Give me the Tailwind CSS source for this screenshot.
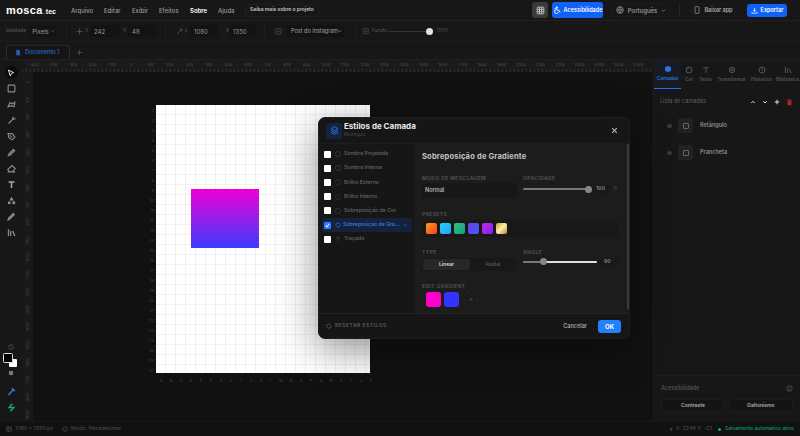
<!DOCTYPE html>
<html lang="pt">
<head>
<meta charset="UTF-8">
<title>mosca.tec</title>
<script src="https://cdn.jsdelivr.net/npm/@tailwindcss/browser@4"></script>
</head>
<body class="bg-[#111111] overflow-hidden">
<div class="relative w-[800px] h-[436px] overflow-hidden flex flex-col bg-[#111111] text-[#8a8a8a] font-['Inter',sans-serif] text-[6px] whitespace-nowrap">

  <!-- top menu -->
  <header class="h-[21px] shrink-0 flex items-center bg-[#171717] border-b border-[#202020] pl-[6px] pr-[13px]">
    <div class="w-[65px] flex items-baseline font-['Liberation_Sans',sans-serif] text-white">
      <span class="text-[11px] font-bold tracking-[0.4px]">mosca</span><span class="text-[7px] font-bold ml-[1px]"><span class="text-[#2f7bff]">.</span>tec</span>
    </div>
    <nav class="flex items-center text-[6px] font-medium text-[#9a9a9a]">
      <span class="w-[33px]">Arquivo</span>
      <span class="w-[28px]">Editar</span>
      <span class="w-[27px]">Exibir</span>
      <span class="w-[31px]">Efeitos</span>
      <span class="w-[28px] text-white font-semibold">Sobre</span>
      <span class="w-[27px]">Ajuda</span>
    </nav>
    <div class="h-[13px] w-[74px] rounded-[3px] border border-[#1f1f1f] text-[#c4c4c4] text-[5px] font-semibold flex items-center justify-center">Saiba mais sobre o projeto</div>
    <div class="flex-1"></div>
    <div class="w-[16px] h-[16px] rounded-[3px] bg-[#3a3a3a] flex items-center justify-center text-[#ddd]">
      <svg class="w-[9px] h-[9px]" viewBox="0 0 24 24" fill="none" stroke="currentColor" stroke-width="2"><rect x="3" y="3" width="18" height="18" rx="2"/><path d="M3 9h18M3 15h18M9 3v18M15 3v18"/></svg>
    </div>
    <button class="ml-[4px] w-[51px] h-[16px] rounded-[3px] bg-[#0f62f5] text-white flex items-center justify-center gap-[3px] text-[5.5px] font-semibold">
      <svg class="w-[8px] h-[8px]" viewBox="0 0 24 24" fill="none" stroke="currentColor" stroke-width="2.6" stroke-linecap="round"><circle cx="11" cy="4" r="2"/><path d="M5 9l6-2 2 6h5l3 6M9 11a6 6 0 1 0 7 8"/></svg>
      Acessibilidade
    </button>
    <div class="ml-[8px] w-[60px] h-[14px] rounded-[3px] border border-[#1c1c1c] flex items-center justify-center gap-[4px] text-[6px] font-medium text-[#a0a0a0]">
      <svg class="w-[8px] h-[8px]" viewBox="0 0 24 24" fill="none" stroke="currentColor" stroke-width="2"><circle cx="12" cy="12" r="10"/><path d="M2 12h20M12 2a15 15 0 0 1 0 20M12 2a15 15 0 0 0 0 20"/></svg>
      Português
      <svg class="w-[5px] h-[5px]" viewBox="0 0 24 24" fill="none" stroke="currentColor" stroke-width="3"><path d="M5 9l7 7 7-7"/></svg>
    </div>
    <div class="ml-[8px] w-px h-[12px] bg-[#242424]"></div>
    <div class="ml-[11px] w-[44px] h-[13px] rounded-[3px] border border-[#1c1c1c] flex items-center justify-center gap-[3px] text-[5.5px] font-semibold text-[#a8a8a8]">
      <svg class="w-[8px] h-[8px]" viewBox="0 0 24 24" fill="none" stroke="currentColor" stroke-width="2"><rect x="6" y="2" width="12" height="20" rx="2"/></svg>
      Baixar app
    </div>
    <button class="ml-[12px] w-[40px] h-[13px] rounded-[3px] bg-[#0f62f5] text-white flex items-center justify-center gap-[3px] text-[5.5px] font-semibold">
      <svg class="w-[7px] h-[7px]" viewBox="0 0 24 24" fill="none" stroke="currentColor" stroke-width="2.5"><path d="M12 3v12M7 10l5 5 5-5M3 17v4h18v-4"/></svg>
      Exportar
    </button>
  </header>

  <!-- options bar -->
  <div class="h-[21px] shrink-0 flex items-center bg-[#171717] border-b border-[#1d1d1d] pl-[6px] text-[6px]">
    <span class="w-[24px] text-[5px] font-semibold text-[#4f4f4f]">Unidade</span>
    <div class="w-[27px] h-[12px] bg-[#131313] rounded-[2px] flex items-center justify-center gap-[2px] text-[#9a9a9a]">Pixels
      <svg class="w-[4px] h-[4px]" viewBox="0 0 24 24" fill="none" stroke="currentColor" stroke-width="3"><path d="M5 9l7 7 7-7"/></svg>
    </div>
    <div class="ml-[9px] mr-[9px] w-px h-[11px] bg-[#202020]"></div>
    <svg class="w-[7px] h-[7px] text-[#555]" viewBox="0 0 24 24" fill="none" stroke="currentColor" stroke-width="3"><path d="M12 2v20M2 12h20"/></svg>
    <span class="ml-[2px] w-[5px] text-[5px] text-[#555]">X</span>
    <div class="w-[29px] h-[12px] bg-[#131313] rounded-[2px] flex items-center pl-[4px] text-[#9a9a9a]">242</div>
    <span class="ml-[4px] w-[5px] text-[5px] text-[#555]">Y</span>
    <div class="w-[29px] h-[12px] bg-[#131313] rounded-[2px] flex items-center pl-[4px] text-[#9a9a9a]">48</div>
    <div class="ml-[8px] mr-[10px] w-px h-[11px] bg-[#202020]"></div>
    <svg class="w-[7px] h-[7px] text-[#555]" viewBox="0 0 24 24" fill="none" stroke="currentColor" stroke-width="3"><path d="M4 20L20 4M13 4h7v7"/></svg>
    <span class="ml-[2px] w-[4px] text-[5px] text-[#555]">L</span>
    <div class="ml-[1px] w-[28px] h-[12px] bg-[#131313] rounded-[2px] flex items-center pl-[4px] text-[#9a9a9a]">1080</div>
    <span class="ml-[8px] w-[3px] text-[5px] text-[#555]">A</span>
    <div class="w-[27px] h-[12px] bg-[#131313] rounded-[2px] flex items-center pl-[4px] text-[#9a9a9a]">1350</div>
    <div class="ml-[8px] mr-[10px] w-px h-[11px] bg-[#202020]"></div>
    <svg class="w-[7px] h-[7px] text-[#666]" viewBox="0 0 24 24" fill="none" stroke="currentColor" stroke-width="2"><rect x="3" y="3" width="18" height="18" rx="2"/><path d="M8 12h8"/></svg>
    <div class="ml-[4px] w-[59px] h-[12px] bg-[#131313] rounded-[2px] flex items-center justify-between pl-[5px] pr-[3px] text-[5.5px] text-[#a0a0a0]">Post do Instagram
      <svg class="w-[6px] h-[6px] text-[#ccc]" viewBox="0 0 24 24" fill="none" stroke="currentColor" stroke-width="4"><path d="M5 9l7 7 7-7"/></svg>
    </div>
    <div class="ml-[10px] mr-[7px] w-px h-[11px] bg-[#202020]"></div>
    <svg class="w-[6px] h-[6px] text-[#555]" viewBox="0 0 24 24" fill="none" stroke="currentColor" stroke-width="2"><rect x="3" y="3" width="18" height="18"/><path d="M3 12h18M12 3v18"/></svg>
    <span class="ml-[3px] w-[16px] text-[5px] text-[#555]">Fundo</span>
    <div class="relative w-[45px] h-px bg-[#333]">
      <div class="absolute right-0 -top-[3px] w-[7px] h-[7px] rounded-full bg-[#e4e4e4]"></div>
    </div>
    <span class="ml-[4px] text-[4.5px] text-[#555]">100%</span>
  </div>

  <!-- tabs -->
  <div class="h-[18px] shrink-0 flex items-end bg-[#171717] border-b border-[#1f1f1f] pl-[6px]">
    <div class="w-[64px] h-[14px] rounded-t-[3px] border border-b-0 border-[#2a2a2a] bg-[#151515] flex items-center pl-[8px] gap-[4px] text-[5.5px] font-semibold text-[#2a5cb8]">
      <svg class="w-[6px] h-[7px]" viewBox="0 0 24 24" fill="currentColor"><path d="M5 1h10l5 5v17H5z"/></svg>
      Documento 1
    </div>
    <svg class="ml-[6px] mb-[3px] w-[7px] h-[7px] text-[#555]" viewBox="0 0 24 24" fill="none" stroke="currentColor" stroke-width="2.5"><path d="M12 3v18M3 12h18"/></svg>
  </div>

  <!-- main -->
  <div class="flex-1 flex min-h-0">
    <!-- tools -->
    <aside class="w-[22px] shrink-0 bg-[#171717] flex flex-col items-center pt-[8px] text-[#8c8c8c]">
      <div class="flex flex-col items-center gap-[7px]">
        <div class="w-[11px] h-[9px] flex items-center justify-center relative">
          <div class="absolute -inset-x-[1px] -inset-y-[2px] rounded-full bg-[#0b0b0b]"></div>
          <svg class="relative w-[8px] h-[8px] text-[#ddd]" viewBox="0 0 24 24" fill="none" stroke="currentColor" stroke-width="3"><path d="M4 3l16 8-7 2-3 8z"/></svg>
        </div>
        <svg class="w-[9px] h-[9px]" viewBox="0 0 24 24" fill="none" stroke="currentColor" stroke-width="3"><rect x="3" y="3" width="18" height="18" rx="2"/></svg>
        <svg class="w-[9px] h-[9px]" viewBox="0 0 24 24" fill="none" stroke="currentColor" stroke-width="3"><path d="M3 18L8 7l6 3 7-4-2 12-7-3z"/></svg>
        <svg class="w-[9px] h-[9px]" viewBox="0 0 24 24" fill="none" stroke="currentColor" stroke-width="3"><path d="M4 20L16 8M14 4l6 6M17 2l1 2M21 6l2 1"/></svg>
        <svg class="w-[9px] h-[9px]" viewBox="0 0 24 24" fill="none" stroke="currentColor" stroke-width="3"><path d="M3 4l12 1 6 9-7 7-9-6zM8 9l5 5"/></svg>
        <svg class="w-[9px] h-[9px]" viewBox="0 0 24 24" fill="none" stroke="currentColor" stroke-width="3.5"><path d="M4 20l2-5L17 4l3 3L9 18z"/></svg>
        <svg class="w-[9px] h-[9px]" viewBox="0 0 24 24" fill="none" stroke="currentColor" stroke-width="3"><path d="M7 21l-5-6L13 4l9 8-8 9zM2 21h20"/></svg>
        <svg class="w-[9px] h-[9px] text-[#aaa]" viewBox="0 0 24 24" fill="none" stroke="currentColor" stroke-width="4"><path d="M4 5h16M12 5v16"/></svg>
        <svg class="w-[9px] h-[9px]" viewBox="0 0 24 24" fill="currentColor"><path d="M12 2l6 10H6z"/><circle cx="6" cy="18" r="4"/><rect x="14" y="14" width="8" height="8" rx="3"/></svg>
        <svg class="w-[9px] h-[9px]" viewBox="0 0 24 24" fill="none" stroke="currentColor" stroke-width="3.5"><path d="M3 21l3-1L19 7l-2-3L4 17z"/></svg>
        <svg class="w-[9px] h-[9px]" viewBox="0 0 24 24" fill="none" stroke="currentColor" stroke-width="3.5"><path d="M4 3v18M10 8v13M15 8l6 13"/></svg>
      </div>
      <div class="flex-1"></div>
      <svg class="w-[6px] h-[6px] text-[#666] mb-[3px]" viewBox="0 0 24 24" fill="none" stroke="currentColor" stroke-width="3"><path d="M3 12a9 9 0 0 1 15-6l3 3M21 12a9 9 0 0 1-15 6l-3-3"/></svg>
      <div class="relative w-[15px] h-[15px] -ml-[2px]">
        <div class="absolute left-[6px] top-[6px] w-[8px] h-[8px] bg-white rounded-[1px]"></div>
        <div class="absolute left-0 top-0 w-[10px] h-[10px] bg-black border border-[#ddd] rounded-[1.5px]"></div>
      </div>
      <div class="mt-[3px] w-[4px] h-[4px] bg-[#777]"></div>
      <svg class="mt-[12px] w-[9px] h-[9px] text-[#3d6fd8]" viewBox="0 0 24 24" fill="none" stroke="currentColor" stroke-width="4"><path d="M4 21L16 8M13 3l8 8"/></svg>
      <svg class="mt-[7px] mb-[9px] w-[9px] h-[9px] text-[#17a86b]" viewBox="0 0 24 24" fill="none" stroke="currentColor" stroke-width="4"><path d="M14 2L6 12h12L9 22"/></svg>
    </aside>

    <!-- rulers and canvas -->
    <div class="flex-1 flex flex-col min-w-0">
      <div id="ruler-top" class="relative h-[12px] shrink-0 bg-[#1a1a1a] overflow-hidden bg-[repeating-linear-gradient(90deg,#2e2e2e_0,#2e2e2e_1px,transparent_1px,transparent_4px)] bg-[length:100%_3px] bg-bottom bg-no-repeat"></div>
      <div class="flex-1 flex min-h-0">
        <div id="ruler-left" class="relative w-[11px] shrink-0 bg-[#191919] overflow-hidden"></div>
        <div class="relative flex-1 bg-[#111111]">
          <div id="row-labels" class="absolute left-[113px] top-0"></div>
          <div class="absolute left-[123px] top-[33px] w-[214px] h-[268px] bg-white bg-[linear-gradient(#f1f1f1_1px,transparent_1px),linear-gradient(90deg,#f1f1f1_1px,transparent_1px)] bg-[size:10px_10px] bg-[position:9px_9px]">
            <div class="absolute left-[35px] top-[84px] w-[68px] h-[59px] bg-linear-to-b/srgb from-[#f000d4] to-[#3d3dff]"></div>
          </div>
          <div id="col-labels" class="absolute left-0 top-[306px]"></div>
        </div>
      </div>
    </div>

    <!-- right panel -->
    <aside class="w-[147px] shrink-0 bg-[#171717] border-l border-[#1c1c1c] flex flex-col">
      <div class="h-[29px] shrink-0 flex text-[4.8px] font-semibold text-[#555]">
        <div class="w-[27px] bg-[#161b24] border-b border-[#2270f0] text-[#2c70dc] flex flex-col items-center justify-center gap-[2px]">
          <svg class="w-[8px] h-[8px]" viewBox="0 0 24 24" fill="currentColor"><path d="M12 2l9 5v10l-9 5-9-5V7z"/></svg>
          <span>Camadas</span>
        </div>
        <div class="w-[14px] ml-[1px] flex flex-col items-center justify-center gap-[2px]">
          <svg class="w-[8px] h-[8px]" viewBox="0 0 24 24" fill="none" stroke="currentColor" stroke-width="3"><circle cx="12" cy="12" r="9"/><circle cx="9" cy="9" r="1"/></svg>
          <span>Cor</span>
        </div>
        <div class="w-[19px] flex flex-col items-center justify-center gap-[2px]">
          <svg class="w-[8px] h-[8px]" viewBox="0 0 24 24" fill="none" stroke="currentColor" stroke-width="3"><path d="M4 5h16M12 5v16"/></svg>
          <span>Texto</span>
        </div>
        <div class="w-[33px] flex flex-col items-center justify-center gap-[2px]">
          <svg class="w-[8px] h-[8px]" viewBox="0 0 24 24" fill="none" stroke="currentColor" stroke-width="3"><circle cx="12" cy="12" r="8"/><circle cx="12" cy="12" r="3"/></svg>
          <span>Transformar</span>
        </div>
        <div class="w-[27px] flex flex-col items-center justify-center gap-[2px]">
          <svg class="w-[8px] h-[8px]" viewBox="0 0 24 24" fill="none" stroke="currentColor" stroke-width="3"><circle cx="12" cy="12" r="9"/><path d="M12 7v5l3 2"/></svg>
          <span>Histórico</span>
        </div>
        <div class="w-[25px] flex flex-col items-center justify-center gap-[2px]">
          <svg class="w-[8px] h-[8px]" viewBox="0 0 24 24" fill="none" stroke="currentColor" stroke-width="3"><path d="M4 3v18M10 8v13M15 8l6 13"/></svg>
          <span>Biblioteca</span>
        </div>
      </div>
      <div class="flex items-center pl-[6px] pr-[7px] mt-[8px] h-[9px] text-[#555] text-[5.5px] font-medium">
        <span class="flex-1">Lista de camadas</span>
        <div class="flex items-center gap-[6px] text-[#ddd]">
          <svg class="w-[6px] h-[6px]" viewBox="0 0 24 24" fill="none" stroke="currentColor" stroke-width="4"><path d="M5 16l7-7 7 7"/></svg>
          <svg class="w-[6px] h-[6px]" viewBox="0 0 24 24" fill="none" stroke="currentColor" stroke-width="4"><path d="M5 9l7 7 7-7"/></svg>
          <svg class="w-[6px] h-[6px]" viewBox="0 0 24 24" fill="none" stroke="currentColor" stroke-width="4"><path d="M12 3v18M3 12h18"/></svg>
          <svg class="w-[7px] h-[8px] text-[#b3272d]" viewBox="0 0 24 24" fill="currentColor"><path d="M3 5h18v3H3zM9 1h6v3H9zM5 9h14l-1 14H6z"/></svg>
        </div>
      </div>
      <div class="mt-[12px] flex flex-col gap-[12px] pl-[13px]">
        <div class="flex items-center h-[15px]">
          <div class="w-[5px] h-[4px] rounded-full bg-[#3a3a3a]"></div>
          <div class="ml-[6px] w-[15px] h-[15px] rounded-[2px] bg-[#222] flex items-center justify-center">
            <div class="w-[6px] h-[6px] rounded-[1px] border border-[#666]"></div>
          </div>
          <span class="ml-[7px] text-[5.5px] font-semibold text-[#8c8c8c]">Retângulo</span>
        </div>
        <div class="flex items-center h-[15px]">
          <div class="w-[5px] h-[4px] rounded-full bg-[#3a3a3a]"></div>
          <div class="ml-[6px] w-[15px] h-[15px] rounded-[2px] bg-[#222] flex items-center justify-center">
            <div class="w-[6px] h-[6px] rounded-[1px] border border-[#666]"></div>
          </div>
          <span class="ml-[7px] text-[5.5px] font-semibold text-[#8c8c8c]">Prancheta</span>
        </div>
      </div>
      <div class="flex-1"></div>
      <div class="border-t border-[#1d1d1d] h-[46px] shrink-0 px-[7px] pt-[8px]">
        <div class="flex items-center justify-between text-[5.5px] font-medium text-[#555]">
          <span>Acessibilidade</span>
          <svg class="w-[7px] h-[7px] text-[#555]" viewBox="0 0 24 24" fill="none" stroke="currentColor" stroke-width="3"><circle cx="12" cy="12" r="9"/><path d="M12 11v6"/></svg>
        </div>
        <div class="mt-[7px] flex gap-[4px] text-[5px] font-semibold text-[#b0b0b0]">
          <div class="w-[65px] h-[13px] rounded-[2px] bg-[#141414] border border-[#1c1c1c] flex items-center justify-center">Contraste</div>
          <div class="w-[65px] h-[13px] rounded-[2px] bg-[#141414] border border-[#1c1c1c] flex items-center justify-center">Daltonismo</div>
        </div>
      </div>
    </aside>
  </div>

  <!-- status bar -->
  <footer class="h-[15px] shrink-0 bg-[#111111] border-t border-[#171717] flex items-center pl-[6px] pr-[6px] text-[5.3px] text-[#4f4f4f]">
    <svg class="w-[6px] h-[6px]" viewBox="0 0 24 24" fill="none" stroke="currentColor" stroke-width="3"><rect x="3" y="3" width="18" height="18" rx="2"/><path d="M3 9h18M9 9v12"/></svg>
    <span class="ml-[3px] w-[47px]">1080 × 1350 px</span>
    <svg class="w-[6px] h-[6px]" viewBox="0 0 24 24" fill="none" stroke="currentColor" stroke-width="3"><circle cx="12" cy="12" r="9"/></svg>
    <span class="ml-[3px]">Modo: Hexadecimal</span>
    <div class="flex-1"></div>
    <svg class="w-[5px] h-[5px]" viewBox="0 0 24 24" fill="currentColor"><path d="M3 3l18 6-8 3-3 9z"/></svg>
    <span class="ml-[2px] w-[42px]">X: 2248 Y: -23</span>
    <div class="w-[3px] h-[3px] rounded-full bg-[#17b26a]"></div>
    <span class="ml-[4px] text-[5px] text-[#0f9d63] font-medium">Salvamento automático ativo</span>
  </footer>

  <!-- layer styles dialog -->
  <div class="absolute left-[318px] top-[117px] w-[312px] h-[222px] rounded-[7px] bg-[#161616] border border-[#1f1f1f] shadow-[0_10px_40px_rgba(0,0,0,0.45)] flex flex-col overflow-hidden">
    <div class="h-[26px] shrink-0 flex items-center pl-[7px] pr-[11px] border-b border-[#1d1d1d]">
      <div class="w-[16px] h-[16px] rounded-[3px] bg-[#14233f] flex items-center justify-center text-[#2c74ea]">
        <svg class="w-[9px] h-[9px]" viewBox="0 0 24 24" fill="none" stroke="currentColor" stroke-width="2.5"><path d="M12 2l9 5-9 5-9-5zM3 12l9 5 9-5M3 17l9 5 9-5"/></svg>
      </div>
      <div class="ml-[2px] -mt-[1px] flex flex-col">
        <span class="text-[8px] leading-[9px] font-bold text-[#e8e8e8]">Estilos de Camada</span>
        <span class="text-[4.5px] leading-[7px] text-[#4a4a4a]">Retângulo</span>
      </div>
      <div class="flex-1"></div>
      <svg class="w-[7px] h-[7px] text-[#bbb]" viewBox="0 0 24 24" fill="none" stroke="currentColor" stroke-width="3.5"><path d="M4 4l16 16M20 4L4 20"/></svg>
    </div>
    <div class="flex-1 flex min-h-0">
      <!-- effect list -->
      <div class="w-[95px] shrink-0 pt-[3px] flex flex-col text-[5.2px] font-medium text-[#666]">
        <div class="h-[14.2px] flex items-center pl-[5px]">
          <div class="w-[7px] h-[7px] rounded-[1px] bg-white"></div>
          <div class="ml-[4px] w-[6px] h-[6px] rounded-full border border-[#333]"></div>
          <span class="ml-[3px]">Sombra Projetada</span>
        </div>
        <div class="h-[14.2px] flex items-center pl-[5px]">
          <div class="w-[7px] h-[7px] rounded-[1px] bg-white"></div>
          <div class="ml-[4px] w-[6px] h-[6px] rounded-full border border-[#333]"></div>
          <span class="ml-[3px]">Sombra Interna</span>
        </div>
        <div class="h-[14.2px] flex items-center pl-[5px]">
          <div class="w-[7px] h-[7px] rounded-[1px] bg-white"></div>
          <div class="ml-[4px] w-[6px] h-[6px] rounded-full border border-[#2a2a2a]"></div>
          <span class="ml-[3px]">Brilho Externo</span>
        </div>
        <div class="h-[14.2px] flex items-center pl-[5px]">
          <div class="w-[7px] h-[7px] rounded-[1px] bg-white"></div>
          <div class="ml-[4px] w-[6px] h-[6px] rounded-full border border-[#2a2a2a]"></div>
          <span class="ml-[3px]">Brilho Interno</span>
        </div>
        <div class="h-[14.2px] flex items-center pl-[5px]">
          <div class="w-[7px] h-[7px] rounded-[1px] bg-white"></div>
          <div class="ml-[4px] w-[6px] h-[6px] rounded-full border border-[#333]"></div>
          <span class="ml-[3px]">Sobreposição de Cor</span>
        </div>
        <div class="h-[14.2px] ml-[3px] mr-[2px] rounded-[2px] bg-[#14233b] flex items-center pl-[2px] text-[#3f7be0]">
          <div class="w-[7px] h-[7px] rounded-[1px] bg-[#2f7bff] flex items-center justify-center">
            <svg class="w-[5px] h-[5px] text-white" viewBox="0 0 24 24" fill="none" stroke="currentColor" stroke-width="5"><path d="M4 12l5 6L20 6"/></svg>
          </div>
          <svg class="ml-[4px] w-[6px] h-[6px]" viewBox="0 0 24 24" fill="none" stroke="currentColor" stroke-width="3"><path d="M3 12a9 9 0 0 1 15-6l3 3M21 12a9 9 0 0 1-15 6l-3-3"/></svg>
          <span class="ml-[2px]">Sobreposição de Gra...</span>
          <svg class="ml-[3px] w-[4px] h-[4px]" viewBox="0 0 24 24" fill="none" stroke="currentColor" stroke-width="4"><path d="M5 9l7 7 7-7"/></svg>
        </div>
        <div class="h-[14.2px] flex items-center pl-[5px]">
          <div class="w-[7px] h-[7px] rounded-[1px] bg-white"></div>
          <svg class="ml-[4px] w-[6px] h-[6px] text-[#444]" viewBox="0 0 24 24" fill="none" stroke="currentColor" stroke-width="3"><path d="M4 5h16M12 5v16"/></svg>
          <span class="ml-[3px]">Traçado</span>
        </div>
      </div>
      <!-- settings -->
      <div class="relative flex-1 bg-[#1c1c1c] pl-[8px] pr-[12px] pt-[8px]">
        <div class="text-[7.5px] leading-[9px] font-bold tracking-[0.2px] text-[#c4c4c4]">Sobreposição de Gradiente</div>
        <div class="mt-[14px] flex gap-[6px]">
          <div class="w-[95px]">
            <div class="text-[5px] leading-[6px] font-semibold tracking-[0.4px] text-[#565656]">MODO DE MESCLAGEM</div>
            <div class="mt-[2px] h-[15px] rounded-[2px] bg-[#171717] flex items-center pl-[3px] text-[5.5px] font-semibold text-[#b0b0b0]">Normal</div>
          </div>
          <div class="w-[95px]">
            <div class="text-[5px] leading-[6px] font-semibold tracking-[0.4px] text-[#565656]">OPACIDADE</div>
            <div class="mt-[2px] h-[12px] flex items-center">
              <div class="relative w-[69px] h-[2px] rounded-full bg-[#77777f]">
                <div class="absolute -right-[1px] -top-[2.5px] w-[7px] h-[7px] rounded-full bg-[#85858d]"></div>
              </div>
              <div class="ml-[5px] w-[15px] h-[9px] rounded-[2px] bg-[#191919] flex items-center text-[5px] font-semibold text-[#8c8c8c]">100</div>
              <span class="ml-[2px] text-[5px] text-[#555]">%</span>
            </div>
          </div>
        </div>
        <div class="mt-[13px] text-[5px] leading-[6px] font-semibold tracking-[0.4px] text-[#565656]">PRESETS</div>
        <div class="mt-[3px] w-[196px] h-[17px] rounded-[2px] bg-[#181818] flex items-center gap-[3px] pl-[4px]">
          <div class="w-[11px] h-[11px] rounded-[2px] bg-gradient-to-br from-[#ff9a1f] to-[#f2361d]"></div>
          <div class="w-[11px] h-[11px] rounded-[2px] bg-gradient-to-br from-[#27d3f5] to-[#2a9df4]"></div>
          <div class="w-[11px] h-[11px] rounded-[2px] bg-gradient-to-br from-[#2fbf86] to-[#1b9e77]"></div>
          <div class="w-[11px] h-[11px] rounded-[2px] bg-gradient-to-br from-[#6a3de8] to-[#3a5bf5]"></div>
          <div class="w-[11px] h-[11px] rounded-[2px] bg-gradient-to-br from-[#c81ee8] to-[#7a1ef0]"></div>
          <div class="w-[11px] h-[11px] rounded-[2px] bg-gradient-to-br from-[#c9a227] via-[#fbeeb0] to-[#b8891c]"></div>
        </div>
        <div class="mt-[12px] flex gap-[6px]">
          <div class="w-[95px]">
            <div class="text-[5px] leading-[6px] font-semibold tracking-[0.4px] text-[#565656]">TYPE</div>
            <div class="mt-[3px] h-[13px] rounded-[2px] bg-[#181818] flex items-center p-[1px] text-[5px] font-semibold">
              <div class="w-[47px] h-[11px] rounded-[2px] bg-[#272727] text-[#d8d8d8] flex items-center justify-center">Linear</div>
              <div class="flex-1 text-center text-[#555]">Radial</div>
            </div>
          </div>
          <div class="w-[95px]">
            <div class="text-[5px] leading-[6px] font-semibold tracking-[0.4px] text-[#565656]">ANGLE</div>
            <div class="mt-[3px] h-[7px] flex items-center">
              <div class="relative w-[74px] h-[2px] rounded-full bg-[#e0e0e0]">
                <div class="absolute left-0 top-0 w-[20px] h-[2px] bg-[#77777f]"></div>
                <div class="absolute left-[17px] -top-[2.5px] w-[7px] h-[7px] rounded-full bg-[#85858d]"></div>
              </div>
              <div class="ml-[3px] w-[18px] h-[8px] rounded-[2px] bg-[#191919] flex items-center pl-[4px] text-[5px] font-semibold text-[#8c8c8c]">90</div>
            </div>
          </div>
        </div>
        <div class="mt-[12px] text-[5px] leading-[6px] font-semibold tracking-[0.4px] text-[#565656]">EDIT GRADIENT</div>
        <div class="mt-[3px] flex items-center gap-[3px] pl-[4px]">
          <div class="w-[15px] h-[15px] rounded-[3px] bg-[#ff00cc]"></div>
          <div class="w-[15px] h-[15px] rounded-[3px] bg-[#3333ff]"></div>
          <div class="ml-[2px] w-[14px] h-[15px] rounded-[3px] border border-dashed border-[#262626] flex items-center justify-center text-[7px] text-[#555]">+</div>
        </div>
        <div class="absolute right-0 top-0 w-[3px] h-[165px] bg-[#3a3a3a]"></div>
      </div>
    </div>
    <div class="h-[25px] shrink-0 border-t border-[#222] bg-[#161616] flex items-center pl-[7px] pr-[8px]">
      <svg class="w-[6px] h-[6px] text-[#666]" viewBox="0 0 24 24" fill="none" stroke="currentColor" stroke-width="3"><path d="M3 12a9 9 0 0 1 15-6l3 3M21 12a9 9 0 0 1-15 6l-3-3"/></svg>
      <span class="ml-[3px] text-[5px] font-semibold tracking-[0.5px] text-[#5c5c5c]">RESETAR ESTILOS</span>
      <div class="flex-1"></div>
      <span class="text-[5.5px] font-semibold text-[#a0a0a0]">Cancelar</span>
      <button class="ml-[11px] w-[23px] h-[13px] rounded-[3px] bg-[#2280ff] text-white text-[6px] font-bold">OK</button>
    </div>
  </div>
</div>

<script>
  // rulers and artboard labels
  const rulerTop = document.getElementById('ruler-top');
  for (let v = -500; v <= 2600; v += 100) {
    const el = document.createElement('span');
    el.className = 'absolute top-[2px] -translate-x-1/2 text-[4px] leading-[5px] text-[#505050]';
    el.style.left = (109 + (v / 100) * 19.5) + 'px';
    el.textContent = v;
    rulerTop.appendChild(el);
  }
  const rulerLeft = document.getElementById('ruler-left');
  for (let i = 0; i < 20; i++) {
    const el = document.createElement('span');
    el.className = 'absolute left-[5px] -translate-x-1/2 -translate-y-1/2 -rotate-90 text-[4px] leading-[5px] text-[#484848]';
    el.style.top = (10 + i * 17.5) + 'px';
    el.textContent = i * 100;
    rulerLeft.appendChild(el);
  }
  const rows = document.getElementById('row-labels');
  for (let i = 1; i <= 27; i++) {
    const el = document.createElement('span');
    el.className = 'absolute w-[8px] text-right -translate-y-1/2 text-[4px] leading-[5px] text-[#484848]';
    el.style.top = (28 + i * 10) + 'px';
    el.textContent = i;
    rows.appendChild(el);
  }
  const cols = document.getElementById('col-labels');
  'ABCDEFGHIJKLMNOPQRSTUV'.split('').forEach((c, i) => {
    const el = document.createElement('span');
    el.className = 'absolute -translate-x-1/2 text-[4px] leading-[5px] text-[#484848]';
    el.style.left = (128 + i * 10) + 'px';
    el.textContent = c;
    cols.appendChild(el);
  });
</script>
</body>
</html>
